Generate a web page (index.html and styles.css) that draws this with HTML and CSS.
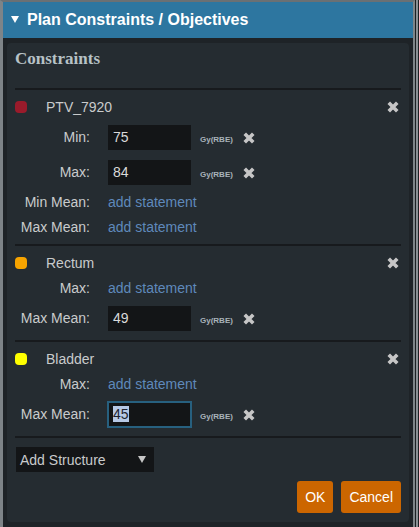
FILE: index.html
```html
<!DOCTYPE html>
<html>
<head>
<meta charset="utf-8">
<link rel="stylesheet" href="styles.css">
</head>
<body>
<div class="screen">
  <div class="window">
    <div class="header">
      <span class="caret"></span>
      <span class="title">Plan Constraints / Objectives</span>
    </div>
    <div class="body">
      <div class="panel">
        <h3 class="heading">Constraints</h3>
        <div class="sep"></div>

        <div class="structure">
          <div class="s-head">
            <span class="dot dot-red"></span>
            <span class="s-name">PTV_7920</span>
            <svg class="x x-head" viewBox="0 0 11 11"><path d="M1.6 1.6L9.4 9.4M9.4 1.6L1.6 9.4"/></svg>
          </div>
          <div class="row row-input">
            <span class="label">Min:</span>
            <span class="input">75</span>
            <span class="unit">Gy(RBE)</span>
            <svg class="x" viewBox="0 0 11 11"><path d="M1.6 1.6L9.4 9.4M9.4 1.6L1.6 9.4"/></svg>
          </div>
          <div class="row row-input">
            <span class="label">Max:</span>
            <span class="input">84</span>
            <span class="unit">Gy(RBE)</span>
            <svg class="x" viewBox="0 0 11 11"><path d="M1.6 1.6L9.4 9.4M9.4 1.6L1.6 9.4"/></svg>
          </div>
          <div class="row row-text">
            <span class="label">Min Mean:</span>
            <a class="link">add statement</a>
          </div>
          <div class="row row-text">
            <span class="label">Max Mean:</span>
            <a class="link">add statement</a>
          </div>
        </div>
        <div class="sep"></div>

        <div class="structure">
          <div class="s-head">
            <span class="dot dot-orange"></span>
            <span class="s-name">Rectum</span>
            <svg class="x x-head" viewBox="0 0 11 11"><path d="M1.6 1.6L9.4 9.4M9.4 1.6L1.6 9.4"/></svg>
          </div>
          <div class="row row-text">
            <span class="label">Max:</span>
            <a class="link">add statement</a>
          </div>
          <div class="row row-input">
            <span class="label">Max Mean:</span>
            <span class="input">49</span>
            <span class="unit">Gy(RBE)</span>
            <svg class="x" viewBox="0 0 11 11"><path d="M1.6 1.6L9.4 9.4M9.4 1.6L1.6 9.4"/></svg>
          </div>
        </div>
        <div class="sep"></div>

        <div class="structure">
          <div class="s-head">
            <span class="dot dot-yellow"></span>
            <span class="s-name">Bladder</span>
            <svg class="x x-head" viewBox="0 0 11 11"><path d="M1.6 1.6L9.4 9.4M9.4 1.6L1.6 9.4"/></svg>
          </div>
          <div class="row row-text">
            <span class="label">Max:</span>
            <a class="link">add statement</a>
          </div>
          <div class="row row-input">
            <span class="label">Max Mean:</span>
            <span class="input input-focus"><span class="selected">45</span></span>
            <span class="unit">Gy(RBE)</span>
            <svg class="x" viewBox="0 0 11 11"><path d="M1.6 1.6L9.4 9.4M9.4 1.6L1.6 9.4"/></svg>
          </div>
        </div>
        <div class="sep"></div>

        <div class="select">
          <span>Add Structure</span>
          <span class="select-arrow"></span>
        </div>

        <div class="actions">
          <button class="btn">OK</button>
          <button class="btn">Cancel</button>
        </div>
      </div>
    </div>
  </div>
  <div class="rail"></div>
</div>
</body>
</html>
```

FILE: styles.css
```css
html, body {
  margin: 0;
  padding: 0;
  background: #1c2023;
  font-family: "Liberation Sans", Arial, sans-serif;
}

.screen {
  display: flex;
  width: 419px;
  height: 527px;
  overflow: hidden;
}

.window {
  box-sizing: border-box;
  width: 415px;
  height: 527px;
  border-style: solid;
  border-width: 2px 2px 0 3px;
  border-color: #6a7074 #7e8488 transparent #7e8488;
  background: #1e2327;
  display: flex;
  flex-direction: column;
}

.rail {
  width: 4px;
  height: 527px;
  background: linear-gradient(to right, #1c2023 0, #1c2023 1px, #8a9094 1px, #8a9094 3px, #1c2023 3px);
}

.header {
  height: 36px;
  background: #2d76a0;
  display: flex;
  align-items: center;
  padding-left: 8px;
}

.caret {
  width: 0;
  height: 0;
  border-top: 7px solid #ffffff;
  border-left: 4px solid transparent;
  border-right: 4px solid transparent;
  margin-right: 8px;
  margin-top: -2px;
}

.title {
  color: #ffffff;
  font-weight: bold;
  font-size: 16px;
}

.body {
  flex: 1;
  padding: 5px 4px 5px 4px;
  display: flex;
  flex-direction: column;
}

.panel {
  flex: 1;
  background: #252c31;
  border-radius: 4px;
  padding: 6px 8px 9px 8px;
  display: flex;
  flex-direction: column;
}

.heading {
  margin: 0;
  font-family: "Liberation Serif", "Times New Roman", serif;
  font-size: 17px;
  line-height: 20px;
  font-weight: bold;
  color: #b7c2c6;
}

.sep {
  height: 2px;
  background: #171a1d;
  flex: none;
}

.heading + .sep {
  margin-top: 19px;
}

.structure {
  padding-bottom: 4px;
}

.s-head {
  height: 20px;
  padding: 7px 0 3px 0;
  display: flex;
  align-items: center;
}

.dot {
  width: 12px;
  height: 12px;
  border-radius: 4px;
  margin-right: 19px;
}

.dot-red { background: #9a1b2b; }
.dot-orange { background: #f7a400; }
.dot-yellow { background: #ffff00; }

.s-name {
  font-size: 14px;
  color: #c9cbcc;
}

.x {
  width: 12px;
  height: 12px;
  fill: none;
  stroke: #c6c6c6;
  stroke-width: 3.3;
  flex: none;
}

.x-head {
  margin-left: auto;
  margin-right: 2px;
}

.row {
  display: flex;
  font-size: 14px;
  color: #c9cbcc;
}

.row-input {
  height: 35px;
  align-items: baseline;
}

.row-text {
  height: 25px;
  line-height: 25px;
  align-items: center;
}

.label {
  width: 75px;
  text-align: right;
  margin-right: 18px;
  flex: none;
}

.input {
  box-sizing: border-box;
  width: 83px;
  height: 25px;
  line-height: 25px;
  margin: 5px 0;
  padding-left: 5px;
  background: #131517;
  color: #dadada;
  flex: none;
}

.input-focus {
  outline: 2px solid #27607f;
  outline-offset: -1px;
}

.selected {
  background: #b6c9e6;
  color: #1d2330;
}

.unit {
  font-size: 8px;
  font-weight: bold;
  color: #a9b3ba;
  margin-left: 9px;
}

.row-input .x {
  align-self: center;
  margin-left: 10px;
}

.link {
  color: #5f89bb;
  cursor: pointer;
}

.select {
  box-sizing: border-box;
  width: 138px;
  height: 25px;
  margin: 9px 0 0 1px;
  background: #131517;
  color: #c9cbcc;
  font-size: 14px;
  display: flex;
  align-items: center;
  padding-left: 4px;
  padding-right: 8px;
}

.select span:first-child {
  flex: 1;
}

.select-arrow {
  width: 0;
  height: 0;
  border-top: 7px solid #c6c6c6;
  border-left: 4px solid transparent;
  border-right: 4px solid transparent;
}

.actions {
  margin-top: 9px;
  display: flex;
  justify-content: flex-end;
  gap: 8px;
}

.btn {
  height: 32px;
  padding: 0 8px;
  border: none;
  border-radius: 3px;
  background: #cc6600;
  color: #ffffff;
  font-family: "Liberation Sans", Arial, sans-serif;
  font-size: 14px;
  margin: 0;
}
```
